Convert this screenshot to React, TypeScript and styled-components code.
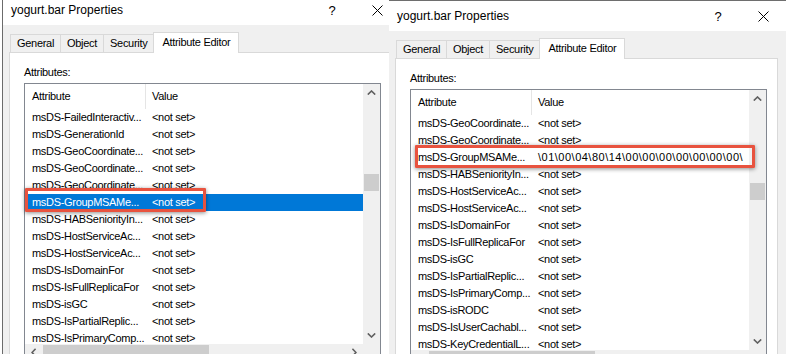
import { ReactElement } from 'react';
import styled, { createGlobalStyle } from 'styled-components';

interface AttrRow {
  name: string;
  value: string;
  selected?: boolean;
  hex?: boolean;
}

interface Mark {
  left: number;
  top: number;
  width: number;
  height: number;
}

interface PropertiesWindowProps {
  shift: number;
  bordered?: boolean;
  rows: AttrRow[];
  thumbTop: number;
  mark: Mark;
}

const GlobalStyle = createGlobalStyle`
  html, body {
    margin: 0;
    padding: 0;
    height: 354px;
    overflow: hidden;
    background: #fff;
  }
  body {
    font-family: "Liberation Sans", Arial, sans-serif;
    font-size: 11px;
    color: #000;
  }
`;

const Screen = styled.div`
  display: flex;
  width: 786px;
  height: 354px;
  overflow: hidden;
  background: #fff;
`;
const LeftSlot = styled.div`
  box-sizing: border-box;
  flex: none;
  overflow: hidden;
  padding-left: 2px;
  width: 389px;
`;
const Window = styled.div<{ $shift: number; $bordered?: boolean }>`
  background: #f0f0f0;
  border-left: ${p => (p.$bordered ? '1px solid #6b6b6b' : 'none')};
  border-top: 1px solid #6e6e6e;
  display: flex;
  flex: none;
  flex-direction: column;
  height: 420px;
  margin-top: ${p => -p.$shift}px;
  width: 397px;
`;
const TitleBar = styled.div`
  align-items: center;
  background: #fff;
  display: flex;
  flex: none;
  height: 30px;
`;
const Title = styled.div`
  flex: 1;
  font-size: 12px;
  padding-left: 8px;
  white-space: nowrap;
`;
const HelpButton = styled.div`
  font-size: 13px;
  text-align: center;
  width: 44px;
`;
const CloseButton = styled.div`
  align-items: center;
  display: flex;
  justify-content: center;
  width: 46px;
`;
const TabRow = styled.div`
  align-items: flex-end;
  display: flex;
  height: 20px;
  margin: 7px 0 0 7px;
  position: relative;
  z-index: 1;
`;
const Tab = styled.div<{ $active?: boolean }>`
  background: ${p => (p.$active ? '#fff' : '#f0f0f0')};
  border: 1px solid #d9d9d9;
  border-bottom: none;
  box-sizing: border-box;
  height: ${p => (p.$active ? 21 : 18)}px;
  letter-spacing: -0.3px;
  line-height: ${p => (p.$active ? 18 : 17)}px;
  margin-bottom: ${p => (p.$active ? -1 : 0)}px;
  margin-left: -1px;
  padding: 0 ${p => (p.$active ? 8 : 6)}px;
  white-space: nowrap;
  &:first-child {
    margin-left: 0;
  }
`;
const Panel = styled.div`
  background: #fff;
  border: 1px solid #d9d9d9;
  box-sizing: border-box;
  flex: 1;
  margin-left: 6px;
  padding: 13px 0 0 14px;
  width: 383px;
`;
const Label = styled.div`
  letter-spacing: -0.3px;
  line-height: 13px;
  margin-bottom: 4px;
`;
const ListBox = styled.div`
  border: 1px solid #828790;
  box-sizing: border-box;
  display: grid;
  grid-template-columns: 1fr 17px;
  grid-template-rows: 260px 17px;
  position: relative;
  width: 357px;
`;
const Table = styled.div`
  overflow: hidden;
`;
const HeaderRow = styled.div`
  display: flex;
  height: 25px;
  letter-spacing: -0.3px;
  line-height: 25px;
`;
const HeaderCell = styled.div<{ $first?: boolean }>`
  border-right: ${p => (p.$first ? '1px solid #e5e5e5' : 'none')};
  box-sizing: border-box;
  flex: ${p => (p.$first ? 'none' : '1')};
  padding-left: ${p => (p.$first ? 7 : 6)}px;
  width: ${p => (p.$first ? '121px' : 'auto')};
`;
const Row = styled.div<{ $selected?: boolean }>`
  background: ${p => (p.$selected ? '#0078d7' : 'transparent')};
  color: ${p => (p.$selected ? '#fff' : '#000')};
  display: flex;
  height: 17px;
  line-height: 17px;
`;
const NameCell = styled.div`
  box-sizing: border-box;
  flex: none;
  letter-spacing: -0.3px;
  overflow: hidden;
  padding-left: 7px;
  white-space: nowrap;
  width: 121px;
`;
const ValueCell = styled.div<{ $hex?: boolean }>`
  flex: 1;
  letter-spacing: ${p => (p.$hex ? '0.5px' : '-0.3px')};
  overflow: hidden;
  padding-left: 6px;
  white-space: nowrap;
`;
const VScroll = styled.div`
  background: #f0f0f0;
  display: flex;
  flex-direction: column;
`;
const ArrowBox = styled.div`
  align-items: center;
  display: flex;
  flex: none;
  height: 17px;
  justify-content: center;
  width: 17px;
`;
const Track = styled.div`
  flex: 1;
`;
const VThumb = styled.div<{ $top: number }>`
  background: #cdcdcd;
  height: 17px;
  margin: ${p => p.$top}px 1px 0;
`;
const HScroll = styled.div`
  background: #f0f0f0;
  display: flex;
`;
const HThumb = styled.div`
  background: #cdcdcd;
  height: 15px;
  margin: 1px 0 0 1px;
  width: 166px;
`;
const Corner = styled.div`
  background: #f0f0f0;
`;
const Highlight = styled.div`
  border: 3px solid #e8533f;
  border-radius: 1px;
  box-shadow: 0 1px 4px rgba(0, 0, 0, 0.45);
  box-sizing: border-box;
  pointer-events: none;
  position: absolute;
`;

const Chevron = ({ dir }: { dir: 'up' | 'down' | 'left' | 'right' }): ReactElement => {
  const pts = {
    up: '0.8,4.6 4.5,1 8.2,4.6',
    down: '0.8,0.4 4.5,4 8.2,0.4',
    left: '4.6,0.8 1,4.5 4.6,8.2',
    right: '0.4,0.8 4,4.5 0.4,8.2',
  }[dir];
  const flat = dir === 'up' || dir === 'down';
  return (
    <svg width={ flat ? 9 : 5 } height={ flat ? 5 : 9 } viewBox={ flat ? '0 0 9 5' : '0 0 5 9' }>
      <polyline points={ pts } fill="none" stroke="#606060" strokeWidth="1.6" />
    </svg>
  );
};

const CloseIcon = (): ReactElement => (
  <svg width="11" height="11" viewBox="0 0 11 11">
    <path d="M0.5 0.5 L10.5 10.5 M10.5 0.5 L0.5 10.5" stroke="#000" strokeWidth="1" />
  </svg>
);

const NOT_SET = '<not set>';

const leftRows: AttrRow[] = [
  { name: 'msDS-FailedInteractiv...', value: NOT_SET },
  { name: 'msDS-GenerationId', value: NOT_SET },
  { name: 'msDS-GeoCoordinate...', value: NOT_SET },
  { name: 'msDS-GeoCoordinate...', value: NOT_SET },
  { name: 'msDS-GeoCoordinate...', value: NOT_SET },
  { name: 'msDS-GroupMSAMe...', value: NOT_SET, selected: true },
  { name: 'msDS-HABSeniorityIn...', value: NOT_SET },
  { name: 'msDS-HostServiceAc...', value: NOT_SET },
  { name: 'msDS-HostServiceAc...', value: NOT_SET },
  { name: 'msDS-IsDomainFor', value: NOT_SET },
  { name: 'msDS-IsFullReplicaFor', value: NOT_SET },
  { name: 'msDS-isGC', value: NOT_SET },
  { name: 'msDS-IsPartialReplic...', value: NOT_SET },
  { name: 'msDS-IsPrimaryComp...', value: NOT_SET },
];

const rightRows: AttrRow[] = [
  { name: 'msDS-GeoCoordinate...', value: NOT_SET },
  { name: 'msDS-GeoCoordinate...', value: NOT_SET },
  { name: 'msDS-GroupMSAMe...', value: '\\01\\00\\04\\80\\14\\00\\00\\00\\00\\00\\00\\00\\', hex: true },
  { name: 'msDS-HABSeniorityIn...', value: NOT_SET },
  { name: 'msDS-HostServiceAc...', value: NOT_SET },
  { name: 'msDS-HostServiceAc...', value: NOT_SET },
  { name: 'msDS-IsDomainFor', value: NOT_SET },
  { name: 'msDS-IsFullReplicaFor', value: NOT_SET },
  { name: 'msDS-isGC', value: NOT_SET },
  { name: 'msDS-IsPartialReplic...', value: NOT_SET },
  { name: 'msDS-IsPrimaryComp...', value: NOT_SET },
  { name: 'msDS-isRODC', value: NOT_SET },
  { name: 'msDS-IsUserCachabl...', value: NOT_SET },
  { name: 'msDS-KeyCredentialL...', value: NOT_SET },
];

const tabs = ['General', 'Object', 'Security', 'Attribute Editor'];

function PropertiesWindow(props: PropertiesWindowProps): ReactElement {
  return (
    <Window $shift={ props.shift } $bordered={ props.bordered }>
      <TitleBar>
        <Title>yogurt.bar Properties</Title>
        <HelpButton>?</HelpButton>
        <CloseButton><CloseIcon /></CloseButton>
      </TitleBar>

      <TabRow>
        { tabs.map(t => (
          <Tab key={ t } $active={ t === 'Attribute Editor' }>{ t }</Tab>
        )) }
      </TabRow>

      <Panel>
        <Label>Attributes:</Label>
        <ListBox>
          <Table>
            <HeaderRow>
              <HeaderCell $first>Attribute</HeaderCell>
              <HeaderCell>Value</HeaderCell>
            </HeaderRow>
            { props.rows.map((r, i) => (
              <Row key={ i } $selected={ r.selected }>
                <NameCell>{ r.name }</NameCell>
                <ValueCell $hex={ r.hex }>{ r.value }</ValueCell>
              </Row>
            )) }
          </Table>

          <VScroll>
            <ArrowBox><Chevron dir="up" /></ArrowBox>
            <Track><VThumb $top={ props.thumbTop } /></Track>
            <ArrowBox><Chevron dir="down" /></ArrowBox>
          </VScroll>

          <HScroll>
            <ArrowBox><Chevron dir="left" /></ArrowBox>
            <Track><HThumb /></Track>
            <ArrowBox><Chevron dir="right" /></ArrowBox>
          </HScroll>
          <Corner />

          <Highlight
            style={ {
              left: props.mark.left,
              top: props.mark.top,
              width: props.mark.width,
              height: props.mark.height,
            } }
          />
        </ListBox>
      </Panel>
    </Window>
  );
}

export default function App(): ReactElement {
  return (
    <>
      <GlobalStyle />
      <Screen>
        <LeftSlot>
          <PropertiesWindow
            shift={ 6 }
            bordered
            rows={ leftRows }
            thumbTop={ 73 }
            mark={ { left: 0, top: 104, width: 181, height: 24 } }
          />
        </LeftSlot>
        <PropertiesWindow
          shift={ 0 }
          rows={ rightRows }
          thumbTop={ 76 }
          mark={ { left: 4, top: 55, width: 340, height: 23 } }
        />
      </Screen>
    </>
  );
}
